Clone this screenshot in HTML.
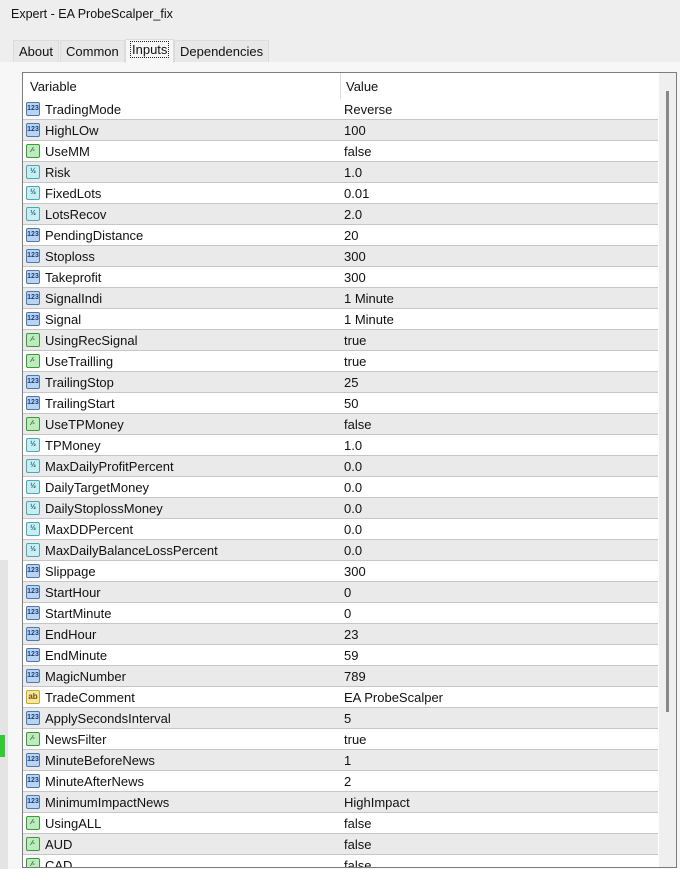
<!DOCTYPE html>
<html><head><meta charset="utf-8">
<style>
*{margin:0;padding:0;box-sizing:border-box}
body{width:680px;height:869px;overflow:hidden;background:#f7f7f7;font-family:"Liberation Sans","Noto Sans CJK SC",sans-serif;font-size:13px;color:#111;position:relative}
.title{position:absolute;left:0;top:0;width:680px;height:30px;background:#eeeeee}
.title span{position:absolute;left:11px;top:7px;font-size:12.5px}
.tabbar{position:absolute;top:30px;left:0;width:680px;height:32px;background:#eeeeee}
.tab{position:absolute;top:10px;height:22px;background:#e8e8e8;border:1px solid #dcdcdc;border-bottom:none;padding:3px 5px 0;font-size:13px}
.tab.act{background:#f7f7f7;top:9px;height:24px;padding-top:2px}
.tab.act span{outline:1px dotted #222;padding:0 1px}
.panel{position:absolute;left:22px;top:72px;width:655px;height:796px;border:1px solid #7d7d7d;background:#fff;overflow:hidden}
.hdr{position:absolute;left:0;top:0;width:635px;height:25px;background:#fff}
.hdr div{position:absolute;top:6px;font-size:13px}
.rows{position:absolute;left:0;top:26px;width:635px}
.r{height:21px;border-bottom:1px solid #c6c6c6;position:relative;background:#fff}
.r.g{background:#eaeaea}
.r .n{position:absolute;left:22px;top:3px}
.r .v{position:absolute;left:321px;top:3px}
.col{position:absolute;left:317px;top:0;width:1px;height:796px;background:#dadada}
.ic{position:absolute;left:3px;top:3px;width:14px;height:14px;border-radius:2px;font-size:7px;font-weight:bold;line-height:12px;text-align:center;border:1px solid}
.i1{background:#b9d4f0;border-color:#4a78b0;color:#1b3e7a}
.i2{background:#bfeabf;border-color:#3a9a3a;color:#145214}
.i3{background:#c8eef2;border-color:#4aa8b8;color:#1b5a6a}
.i4{background:#f6e7a0;border-color:#c6a830;color:#6a4e00;font-size:8px}
.sb{position:absolute;left:636px;top:0;width:18px;height:796px;background:#efefef}
.thumb{position:absolute;left:643px;top:18px;width:3px;height:621px;background:#888}
.left{position:absolute;left:0;top:560px;width:8px;height:309px;background:#e4e4e4}
</style></head><body>
<div class="title"><span>Expert - EA ProbeScalper_fix</span></div>
<div class="tabbar">
<div class="tab" style="left:13px">About</div>
<div class="tab" style="left:60px">Common</div>
<div class="tab act" style="left:125px"><span>Inputs</span></div>
<div class="tab" style="left:174px">Dependencies</div>
</div>
<div class="left"></div>
<div style="position:absolute;left:0;top:735px;width:5px;height:22px;background:#2ecc2e"></div>
<div class="panel">
<div class="hdr"><div style="left:7px">Variable</div><div style="left:323px">Value</div></div>
<div class="col"></div>
<div class="rows">
<div class="r"><span class="ic i1">123</span><span class="n">TradingMode</span><span class="v">Reverse</span></div>
<div class="r g"><span class="ic i1">123</span><span class="n">HighLOw</span><span class="v">100</span></div>
<div class="r"><span class="ic i2">⁄-</span><span class="n">UseMM</span><span class="v">false</span></div>
<div class="r g"><span class="ic i3">½</span><span class="n">Risk</span><span class="v">1.0</span></div>
<div class="r"><span class="ic i3">½</span><span class="n">FixedLots</span><span class="v">0.01</span></div>
<div class="r g"><span class="ic i3">½</span><span class="n">LotsRecov</span><span class="v">2.0</span></div>
<div class="r"><span class="ic i1">123</span><span class="n">PendingDistance</span><span class="v">20</span></div>
<div class="r g"><span class="ic i1">123</span><span class="n">Stoploss</span><span class="v">300</span></div>
<div class="r"><span class="ic i1">123</span><span class="n">Takeprofit</span><span class="v">300</span></div>
<div class="r g"><span class="ic i1">123</span><span class="n">SignalIndi</span><span class="v">1 Minute</span></div>
<div class="r"><span class="ic i1">123</span><span class="n">Signal</span><span class="v">1 Minute</span></div>
<div class="r g"><span class="ic i2">⁄-</span><span class="n">UsingRecSignal</span><span class="v">true</span></div>
<div class="r"><span class="ic i2">⁄-</span><span class="n">UseTrailling</span><span class="v">true</span></div>
<div class="r g"><span class="ic i1">123</span><span class="n">TrailingStop</span><span class="v">25</span></div>
<div class="r"><span class="ic i1">123</span><span class="n">TrailingStart</span><span class="v">50</span></div>
<div class="r g"><span class="ic i2">⁄-</span><span class="n">UseTPMoney</span><span class="v">false</span></div>
<div class="r"><span class="ic i3">½</span><span class="n">TPMoney</span><span class="v">1.0</span></div>
<div class="r g"><span class="ic i3">½</span><span class="n">MaxDailyProfitPercent</span><span class="v">0.0</span></div>
<div class="r"><span class="ic i3">½</span><span class="n">DailyTargetMoney</span><span class="v">0.0</span></div>
<div class="r g"><span class="ic i3">½</span><span class="n">DailyStoplossMoney</span><span class="v">0.0</span></div>
<div class="r"><span class="ic i3">½</span><span class="n">MaxDDPercent</span><span class="v">0.0</span></div>
<div class="r g"><span class="ic i3">½</span><span class="n">MaxDailyBalanceLossPercent</span><span class="v">0.0</span></div>
<div class="r"><span class="ic i1">123</span><span class="n">Slippage</span><span class="v">300</span></div>
<div class="r g"><span class="ic i1">123</span><span class="n">StartHour</span><span class="v">0</span></div>
<div class="r"><span class="ic i1">123</span><span class="n">StartMinute</span><span class="v">0</span></div>
<div class="r g"><span class="ic i1">123</span><span class="n">EndHour</span><span class="v">23</span></div>
<div class="r"><span class="ic i1">123</span><span class="n">EndMinute</span><span class="v">59</span></div>
<div class="r g"><span class="ic i1">123</span><span class="n">MagicNumber</span><span class="v">789</span></div>
<div class="r"><span class="ic i4">ab</span><span class="n">TradeComment</span><span class="v">EA ProbeScalper</span></div>
<div class="r g"><span class="ic i1">123</span><span class="n">ApplySecondsInterval</span><span class="v">5</span></div>
<div class="r"><span class="ic i2">⁄-</span><span class="n">NewsFilter</span><span class="v">true</span></div>
<div class="r g"><span class="ic i1">123</span><span class="n">MinuteBeforeNews</span><span class="v">1</span></div>
<div class="r"><span class="ic i1">123</span><span class="n">MinuteAfterNews</span><span class="v">2</span></div>
<div class="r g"><span class="ic i1">123</span><span class="n">MinimumImpactNews</span><span class="v">HighImpact</span></div>
<div class="r"><span class="ic i2">⁄-</span><span class="n">UsingALL</span><span class="v">false</span></div>
<div class="r g"><span class="ic i2">⁄-</span><span class="n">AUD</span><span class="v">false</span></div>
<div class="r"><span class="ic i2">⁄-</span><span class="n">CAD</span><span class="v">false</span></div>
</div>
<div class="sb"></div>
<div class="thumb"></div>
</div>
</body></html>
